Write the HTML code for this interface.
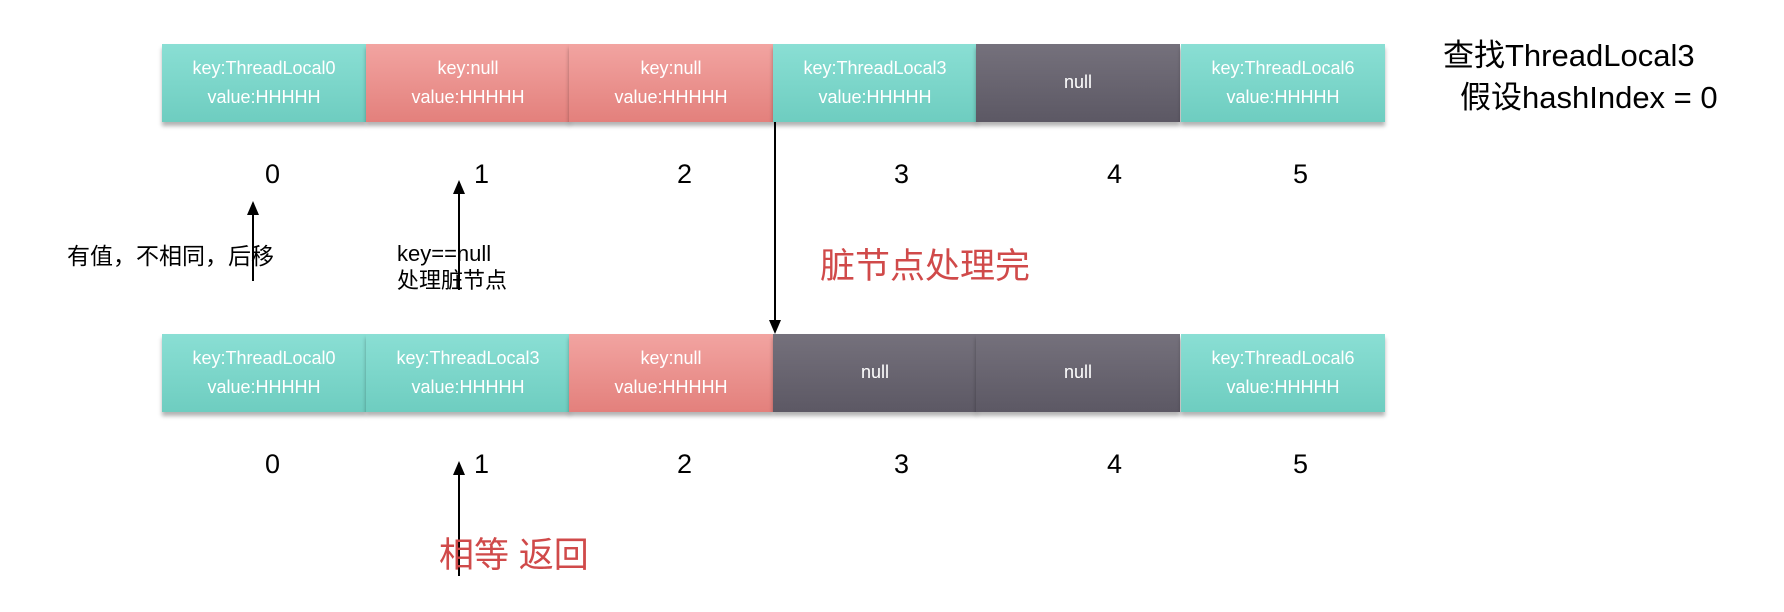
<!DOCTYPE html>
<html><head><meta charset="utf-8"><style>
body{margin:0;width:1784px;height:612px;background:#fff;position:relative;overflow:hidden;font-family:"Liberation Sans","Noto Sans CJK SC",sans-serif}
.c{position:absolute;width:204px;height:78px;color:#fff;font-size:18px;line-height:29px;text-align:center;box-sizing:border-box;padding-top:10px;box-shadow:0 4px 4px rgba(0,0,0,.3)}
.c.s{padding-top:24px}
.t{background:linear-gradient(#8adfd4,#6ecdc0)}
.r{background:linear-gradient(#f2a4a1,#e3807c)}
.d{background:linear-gradient(#75717c,#5c5864)}
.n{position:absolute;font-size:27px;color:#000}
.a{position:absolute;width:2px;background:#000}
.a:before{content:"";position:absolute;left:-5px;top:-2px;border-left:6px solid transparent;border-right:6px solid transparent;border-bottom:14px solid #000}
.x{position:absolute;white-space:nowrap}
</style></head><body>
<div class="c t" style="left:162px;top:44px">key:ThreadLocal0<br>value:HHHHH</div>
<div class="c r" style="left:366px;top:44px">key:null<br>value:HHHHH</div>
<div class="c r" style="left:569px;top:44px">key:null<br>value:HHHHH</div>
<div class="c t" style="left:773px;top:44px">key:ThreadLocal3<br>value:HHHHH</div>
<div class="c d s" style="left:976px;top:44px">null</div>
<div class="c t" style="left:1181px;top:44px">key:ThreadLocal6<br>value:HHHHH</div>

<div class="c t" style="left:162px;top:334px">key:ThreadLocal0<br>value:HHHHH</div>
<div class="c t" style="left:366px;top:334px">key:ThreadLocal3<br>value:HHHHH</div>
<div class="c r" style="left:569px;top:334px">key:null<br>value:HHHHH</div>
<div class="c d s" style="left:773px;top:334px">null</div>
<div class="c d s" style="left:976px;top:334px">null</div>
<div class="c t" style="left:1181px;top:334px">key:ThreadLocal6<br>value:HHHHH</div>

<div class="n" style="left:265px;top:159px">0</div><div class="n" style="left:474px;top:159px">1</div><div class="n" style="left:677px;top:159px">2</div><div class="n" style="left:894px;top:159px">3</div><div class="n" style="left:1107px;top:159px">4</div><div class="n" style="left:1293px;top:159px">5</div>
<div class="n" style="left:265px;top:449px">0</div><div class="n" style="left:474px;top:449px">1</div><div class="n" style="left:677px;top:449px">2</div><div class="n" style="left:894px;top:449px">3</div><div class="n" style="left:1107px;top:449px">4</div><div class="n" style="left:1293px;top:449px">5</div>

<div class="a" style="left:252px;top:203px;height:78px"></div>
<div class="a" style="left:458px;top:182px;height:108px"></div>
<div class="a" style="left:458px;top:463px;height:113px"></div>
<div style="position:absolute;left:774px;top:122px;width:2px;height:200px;background:#000"></div>
<div style="position:absolute;left:769px;top:320px;border-left:6px solid transparent;border-right:6px solid transparent;border-top:14px solid #000"></div>

<div class="x" style="left:67px;top:237px;font-size:23px">有值，不相同，后移</div>
<div class="x" style="left:397px;top:240px;font-size:22px;line-height:27px">key==null<br>处理脏节点</div>
<div class="x" style="left:820px;top:238px;font-size:35px;color:#d04a4a">脏节点处理完</div>
<div class="x" style="left:439px;top:527px;font-size:35px;color:#d04a4a">相等 返回</div>
<div class="x" style="left:1443px;top:30px;font-size:31px">查找ThreadLocal3</div>
<div class="x" style="left:1460px;top:72px;font-size:31px">假设hashIndex = 0</div>
</body></html>
